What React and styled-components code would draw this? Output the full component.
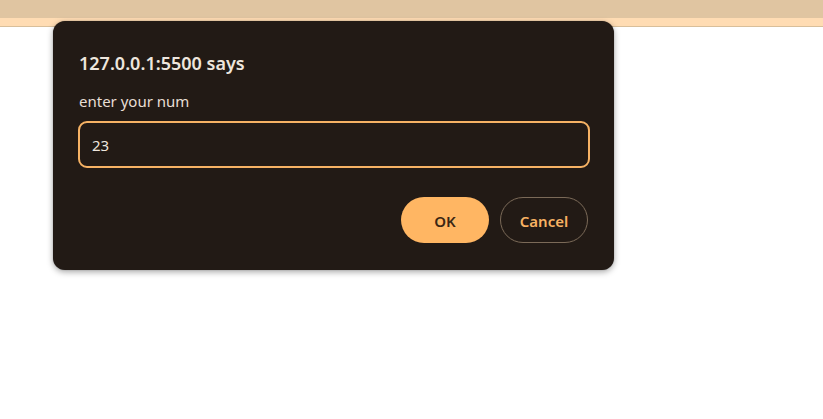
import React from "react";
import styled, { createGlobalStyle } from "styled-components";

const Global = createGlobalStyle`
  html, body { margin: 0; padding: 0; background: #ffffff; }
  body { font-family: "Noto Sans", "Open Sans", sans-serif; }
  * { box-sizing: border-box; }
`;

const Page = styled.div`
  width: 823px;
  height: 419px;
  position: relative;
  overflow: hidden;
  background: #ffffff;
`;

const TopBar = styled.div`
  height: 18px;
  background: #e0c5a1;
`;

const SubBar = styled.div`
  height: 9px;
  background: #ffdcb3;
  border-bottom: 1px solid #d9bf9a;
`;

const Dialog = styled.div`
  position: absolute;
  left: 53px;
  top: 21px;
  width: 561px;
  height: 249px;
  background: #221a15;
  border-radius: 12px;
  box-shadow: 0 2px 6px rgba(0, 0, 0, 0.35), 0 0 1px rgba(0, 0, 0, 0.4);
  padding: 30px 24px 27px 25px;
  display: flex;
  flex-direction: column;
  color: #ece3da;
`;

const Title = styled.div`
  font-size: 18px;
  line-height: 24px;
  font-weight: 600;
  padding-left: 1px;
  color: #eee6dd;
`;

const Message = styled.div`
  margin-top: 16px;
  font-size: 15px;
  line-height: 20px;
  padding-left: 1px;
  color: #e8ded4;
`;

const Input = styled.input`
  margin-top: 10px;
  height: 47px;
  width: 100%;
  border: 2px solid #f6b264;
  border-radius: 9px;
  background: #221a15;
  color: #eee6dd;
  font-family: inherit;
  font-size: 15px;
  padding: 0 12px;
  outline: none;
`;

const Actions = styled.div`
  margin-top: 29px;
  display: flex;
  justify-content: flex-end;
  gap: 11px;
  padding-right: 2px;
`;

const Button = styled.button`
  width: 88px;
  height: 46px;
  border-radius: 23px;
  font-family: inherit;
  font-size: 15px;
  font-weight: 600;
  padding: 2px 0 0;
  cursor: pointer;
  background: ${(p) => (p.$primary ? "#ffb663" : "transparent")};
  color: ${(p) => (p.$primary ? "#3a2614" : "#f8b263")};
  border: ${(p) => (p.$primary ? "none" : "1px solid #7b6a58")};
`;

export default function App() {
  return (
    <Page>
      <Global />
      <TopBar />
      <SubBar />
      <Dialog>
        <Title>127.0.0.1:5500 says</Title>
        <Message>enter your num</Message>
        <Input defaultValue="23" />
        <Actions>
          <Button $primary>OK</Button>
          <Button>Cancel</Button>
        </Actions>
      </Dialog>
    </Page>
  );
}
